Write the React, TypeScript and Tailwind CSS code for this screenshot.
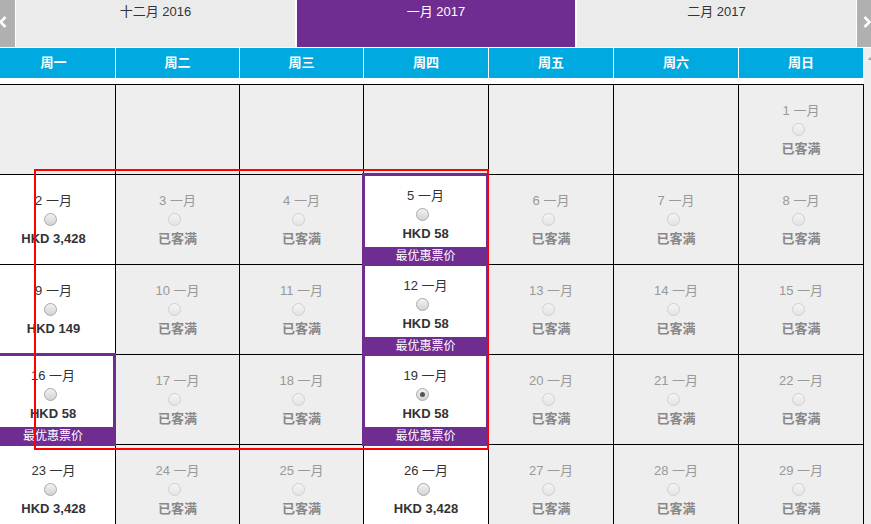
import React from "react";

type Cell = { d?: number; price?: string; best?: boolean; checked?: boolean };

const rows: Cell[][] = [
  [{}, {}, {}, {}, {}, {}, { d: 1 }],
  [{ d: 2, price: "HKD 3,428" }, { d: 3 }, { d: 4 }, { d: 5, price: "HKD 58", best: true }, { d: 6 }, { d: 7 }, { d: 8 }],
  [{ d: 9, price: "HKD 149" }, { d: 10 }, { d: 11 }, { d: 12, price: "HKD 58", best: true }, { d: 13 }, { d: 14 }, { d: 15 }],
  [{ d: 16, price: "HKD 58", best: true }, { d: 17 }, { d: 18 }, { d: 19, price: "HKD 58", best: true, checked: true }, { d: 20 }, { d: 21 }, { d: 22 }],
  [{ d: 23, price: "HKD 3,428" }, { d: 24 }, { d: 25 }, { d: 26, price: "HKD 3,428" }, { d: 27 }, { d: 28 }, { d: 29 }],
];

const days = ["周一", "周二", "周三", "周四", "周五", "周六", "周日"];

function Radio({ enabled, checked }: { enabled: boolean; checked?: boolean }) {
  return enabled ? (
    <div className="w-[13px] h-[13px] rounded-full border border-[#a9a9a9] bg-linear-to-b from-[#f2f2f2] to-[#d3d3d3] flex items-center justify-center">
      {checked && <div className="w-[5px] h-[5px] rounded-full bg-[#555555]" />}
    </div>
  ) : (
    <div className="w-[13px] h-[13px] rounded-full border border-[#d0d0d0] bg-linear-to-b from-[#f4f4f4] to-[#e4e4e4]" />
  );
}

function DayCell({ c }: { c: Cell }) {
  const avail = !!c.price;
  if (c.best) {
    return (
      <div className="relative h-[90px] border-r border-b border-black bg-white">
        <div className="absolute left-[-2px] right-[-1px] top-[-2px] bottom-[-2px] border-t-[3px] border-x-[3px] border-[#6f2c91] bg-white flex flex-col items-center pt-[12px]">
          <div className="text-[13px] leading-[16px] text-[#333333]">{c.d} 一月</div>
          <div className="mt-[4px] mr-[6px]">
            <Radio enabled checked={c.checked} />
          </div>
          <div className="mt-[5px] text-[13px] leading-[16px] font-bold text-[#333333]">{c.price}</div>
          <div className="absolute left-0 right-0 bottom-0 h-[19px] bg-[#6f2c91] text-white text-[12px] leading-[19px] text-center z-[1]">
            最优惠票价
          </div>
        </div>
      </div>
    );
  }
  return (
    <div
      className={
        "h-[90px] border-r border-b border-black flex flex-col items-center pt-[18px] " +
        (avail ? "bg-white" : "bg-[#eeeeee]")
      }
    >
      {c.d !== undefined && (
        <>
          <div className={"text-[13px] leading-[16px] " + (avail ? "text-[#333333]" : "text-[#999999]")}>{c.d} 一月</div>
          <div className="mt-[4px] mr-[6px]">
            <Radio enabled={avail} />
          </div>
          {avail ? (
            <div className="mt-[5px] text-[13px] leading-[16px] font-bold text-[#333333]">{c.price}</div>
          ) : (
            <div className="mt-[5px] text-[13px] leading-[16px] font-bold text-[#888888]">已客满</div>
          )}
        </>
      )}
    </div>
  );
}

export default function App() {
  return (
    <div className="relative w-[871px] h-[524px] overflow-hidden bg-[#eeeeee] font-['Liberation_Sans','Noto_Sans_CJK_SC',sans-serif]">
      <div className="flex h-[48px] bg-white">
        <div className="relative w-[15px] h-[47px] bg-[#b0b0b0] overflow-hidden">
          <svg className="absolute left-[-1px] top-[16px]" width="8" height="12" viewBox="0 0 8 12">
            <path d="M6.5 1 L1.5 6 L6.5 11" fill="none" stroke="white" strokeWidth="2.6" />
          </svg>
        </div>
        <div className="ml-[1px] w-[279px] h-[47px] bg-[#ebebeb] text-center text-[13px] leading-[16px] pt-[4px] text-[#333333]">
          十二月 2016
        </div>
        <div className="ml-[2px] w-[278px] h-[47px] bg-[#6f2c91] text-center text-[13px] leading-[16px] pt-[4px] text-white">
          一月 2017
        </div>
        <div className="ml-[2px] w-[279px] h-[47px] bg-[#ebebeb] text-center text-[13px] leading-[16px] pt-[4px] text-[#333333]">
          二月 2017
        </div>
        <div className="relative ml-[1px] flex-1 h-[47px] bg-[#b0b0b0] overflow-hidden">
          <svg className="absolute left-[6px] top-[16px]" width="8" height="12" viewBox="0 0 8 12">
            <path d="M1.5 1 L6.5 6 L1.5 11" fill="none" stroke="white" strokeWidth="2.6" />
          </svg>
        </div>
      </div>

      <div className="flex">
        <div className="w-[864px] h-[476px] bg-white overflow-hidden">
          <div className="ml-[-8px] w-[872px]">
            <div className="grid grid-cols-[124px_124px_124px_125px_125px_125px_125px] h-[30px] bg-[#00a9e0]">
              {days.map((d) => (
                <div key={d} className="border-r border-white flex items-center justify-center text-white font-bold text-[13px]">
                  {d}
                </div>
              ))}
            </div>
            <div className="h-[6px]" />
            <div className="grid grid-cols-[124px_124px_124px_125px_125px_125px_125px] border-t border-black">
              {rows.flat().map((c, i) => (
                <DayCell key={i} c={c} />
              ))}
            </div>
          </div>
        </div>
        <div className="relative flex-1">
          <svg className="absolute left-[4px] top-[9px]" width="4" height="3" viewBox="0 0 4 3">
            <path d="M0 3 L2 0 L4 3 Z" fill="#a0a0a0" />
          </svg>
        </div>
      </div>

      <div className="absolute left-[34px] top-[169px] w-[455px] h-[281px] border-2 border-[#ff0000] pointer-events-none z-20" />
    </div>
  );
}
